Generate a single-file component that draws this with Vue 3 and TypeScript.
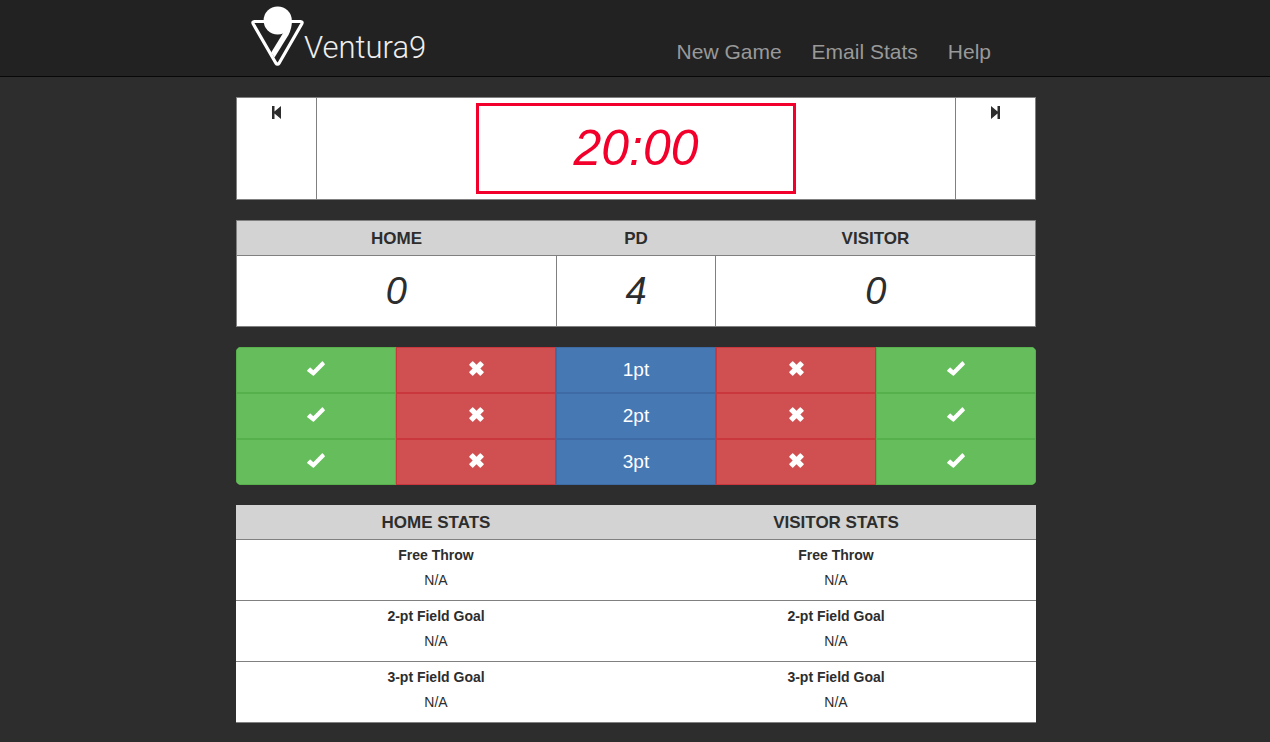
<script setup lang="ts">
import { computed, ref } from 'vue'

type Side = 'home' | 'visitor'

interface ShotButton {
  kind: 'made' | 'missed' | 'label'
  side?: Side
}

const links = ['New Game', 'Email Stats', 'Help']
const statNames = ['Free Throw', '2-pt Field Goal', '3-pt Field Goal']
const points = [1, 2, 3]
const columns: ShotButton[] = [
  { kind: 'made', side: 'home' },
  { kind: 'missed', side: 'home' },
  { kind: 'label' },
  { kind: 'missed', side: 'visitor' },
  { kind: 'made', side: 'visitor' },
]

const clock = ref('20:00')
const period = ref(4)
const made = ref<Record<Side, number[]>>({ home: [0, 0, 0], visitor: [0, 0, 0] })
const missed = ref<Record<Side, number[]>>({ home: [0, 0, 0], visitor: [0, 0, 0] })

const total = (side: Side) => made.value[side].reduce((sum, n, i) => sum + n * points[i], 0)
const homeScore = computed(() => total('home'))
const visitorScore = computed(() => total('visitor'))

function record(button: ShotButton, row: number) {
  if (!button.side) return
  const tally = button.kind === 'made' ? made : missed
  tally.value[button.side][row]++
}

function stat(side: Side, row: number): string {
  const hits = made.value[side][row]
  const tries = hits + missed.value[side][row]
  return tries ? `${hits}/${tries}` : 'N/A'
}
</script>

<template>
  <header class="navbar">
    <div class="container bar">
      <a class="brand" href="#">
        <svg class="mark" viewBox="0 0 53 60" aria-hidden="true">
          <path
            d="M14 15.500H3.500Q1 15.500 2.300 18L24.800 57Q26.500 59.500 28.200 57L50.700 18Q52 15.500 49.500 15.500H39"
            fill="none" stroke="#fff" stroke-width="3.200" stroke-linejoin="round" />
          <path d="M40.700 15Q41 22 37.500 29L23.500 51.500L20.200 46.500L31.500 28Z" fill="#fff" />
          <circle cx="26.700" cy="14.500" r="14.100" fill="#fff" />
        </svg>
        <span class="name">Ventura9</span>
      </a>
      <nav class="links">
        <a v-for="link in links" :key="link" href="#">{{ link }}</a>
      </nav>
    </div>
  </header>

  <main class="container board">
    <section class="timer">
      <button class="skip" type="button" aria-label="Previous period" @click="period--">
        <svg viewBox="0 0 9 13" aria-hidden="true"><path d="M0 0H2.500V5.500L9 0V13L2.500 7.500V13H0Z" /></svg>
      </button>
      <div class="stage">
        <div class="clock">{{ clock }}</div>
      </div>
      <button class="skip" type="button" aria-label="Next period" @click="period++">
        <svg viewBox="0 0 9 13" aria-hidden="true"><path d="M9 0H6.500V5.500L0 0V13L6.500 7.500V13H9Z" /></svg>
      </button>
    </section>

    <table class="score">
      <colgroup>
        <col class="team" />
        <col class="period" />
        <col class="team" />
      </colgroup>
      <thead>
        <tr>
          <th scope="col">HOME</th>
          <th scope="col">PD</th>
          <th scope="col">VISITOR</th>
        </tr>
      </thead>
      <tbody>
        <tr>
          <td>{{ homeScore }}</td>
          <td>{{ period }}</td>
          <td>{{ visitorScore }}</td>
        </tr>
      </tbody>
    </table>

    <section class="shots">
      <template v-for="(point, row) in points" :key="point">
        <button
          v-for="(button, i) in columns"
          :key="i"
          type="button"
          :class="['shot', button.kind]"
          :aria-label="button.side ? `${button.side} ${point}pt ${button.kind}` : undefined"
          @click="record(button, row)"
        >
          <svg v-if="button.kind === 'made'" class="check" viewBox="0 0 18 15" aria-hidden="true">
            <path d="M0.300 9.200L2.700 6.700Q3.200 6.200 3.700 6.700L6.300 9.200L14.900 0.500Q15.400 0 15.900 0.500L17.700 2.800Q18.100 3.300 17.700 3.800L7 14.500Q6.400 15.100 5.800 14.500L0.300 10.200Q-0.100 9.700 0.300 9.200Z" />
          </svg>
          <svg v-else-if="button.kind === 'missed'" class="cross" viewBox="0 0 15 15" aria-hidden="true">
            <path d="M3.200 0.400Q3.700 0 4.200 0.400L7.500 3.700L10.800 0.400Q11.300 0 11.800 0.400L14.600 3.200Q15 3.700 14.600 4.200L11.300 7.500L14.600 10.800Q15 11.300 14.600 11.800L11.800 14.600Q11.300 15 10.800 14.600L7.500 11.300L4.200 14.600Q3.700 15 3.200 14.600L0.400 11.800Q0 11.300 0.400 10.800L3.700 7.500L0.400 4.200Q0 3.700 0.400 3.200Z" />
          </svg>
          <template v-else>{{ point }}pt</template>
        </button>
      </template>
    </section>

    <table class="stats">
      <thead>
        <tr>
          <th scope="col">HOME STATS</th>
          <th scope="col">VISITOR STATS</th>
        </tr>
      </thead>
      <tbody>
        <tr v-for="(name, row) in statNames" :key="name">
          <td>
            <strong>{{ name }}</strong>
            <span>{{ stat('home', row) }}</span>
          </td>
          <td>
            <strong>{{ name }}</strong>
            <span>{{ stat('visitor', row) }}</span>
          </td>
        </tr>
      </tbody>
    </table>
  </main>
</template>

<style>
body {
  background: #2d2d2d;
  color: #2d2d2d;
  font: 14px/20px "Liberation Sans", Arial, sans-serif;
}
</style>

<style scoped>
.container {
  width: 100%;
  max-width: 802px;
  margin: 0 auto;
  padding-left: 2px;
  box-sizing: border-box;
}

.navbar {
  background: #222;
  border-bottom: 1px solid #080808;
}

.bar {
  display: flex;
  justify-content: space-between;
  min-height: 76px;
}

.brand {
  display: flex;
  align-items: flex-start;
  padding: 6px 0 0 15px;
  color: #fff;
  text-decoration: none;
}

.mark {
  width: 53px;
  height: 60px;
}

.name {
  padding-top: 21px;
  font: 300 31px/42px Roboto, sans-serif;
  color: #eee;
}

.links {
  display: flex;
  align-items: flex-end;
  padding: 0 30px 13px 0;
}

.links a {
  padding: 0 15px;
  font-size: 21px;
  line-height: 22px;
  color: #999;
  text-decoration: none;
}

.board {
  display: flex;
  flex-direction: column;
  gap: 20px;
  padding-top: 20px;
  padding-bottom: 19px;
}

.timer {
  display: flex;
  background: #fff;
  border: 1px solid #808080;
}

.skip {
  display: flex;
  flex: 1;
  justify-content: center;
  align-items: flex-start;
  box-sizing: border-box;
  padding: 8px 0 0;
  border: 0;
  background: none;
}

.skip svg {
  width: 9px;
  height: 13px;
  fill: #2d2d2d;
}

.stage {
  flex: 0 0 80%;
  padding: 5px 0;
  border: solid #808080;
  border-width: 0 1px;
}

.clock {
  width: 50%;
  margin: 0 auto;
  box-sizing: border-box;
  border: 3px solid #f2002b;
  color: #f2002b;
  font-size: 50px;
  font-style: italic;
  line-height: 85px;
  text-align: center;
}

table {
  width: 100%;
  border-collapse: collapse;
  table-layout: fixed;
  background: #fff;
  text-align: center;
}

th {
  padding: 8px 0 6px;
  background: #d3d3d3;
  font-size: 17px;
  line-height: 20px;
}

.score,
.score td {
  border: 1px solid #808080;
}

.team {
  width: 40%;
}

.period {
  width: 20%;
}

.score td {
  padding: 0;
  font-size: 38px;
  font-style: italic;
  line-height: 70px;
}

.shots {
  display: grid;
  grid-template-columns: repeat(5, 1fr);
  border-radius: 5px;
  overflow: hidden;
}

.shot {
  display: flex;
  justify-content: center;
  align-items: center;
  height: 46px;
  padding: 0;
  border: 1px solid;
  color: #fff;
  font: 19px/24px "Liberation Sans", Arial, sans-serif;
}

.shot svg {
  height: 15px;
  margin-bottom: 3px;
  fill: #fff;
}

.check {
  width: 18px;
}

.cross {
  width: 15px;
}

.made {
  background: #65bd5c;
  border-color: #56b04b;
}

.missed {
  background: #d05052;
  border-color: #ca383e;
}

.label {
  background: #4678b4;
  border-color: #3f6ba4;
}

.stats tr {
  border-bottom: 1px solid #808080;
}

.stats td {
  padding: 5px 0 10px;
}

.stats strong,
.stats span {
  display: block;
}

.stats span {
  margin-top: 5px;
}
</style>
